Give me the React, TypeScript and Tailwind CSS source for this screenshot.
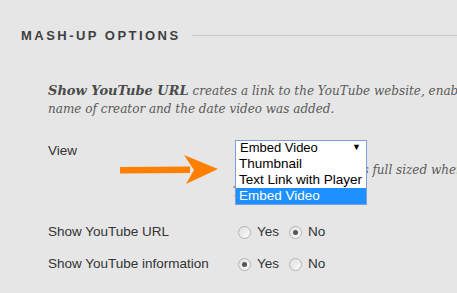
import React from "react";

const Radio = ({ checked }: { checked?: boolean }) => (
  <span className="flex h-[13px] w-[13px] items-center justify-center rounded-full border border-[#b4b4b4] bg-gradient-to-br from-[#e0e0e0] to-[#fafafa]">
    {checked && <span className="h-[5px] w-[5px] rounded-full bg-[#555]" />}
  </span>
);

const OptionRow = ({ label, yes }: { label: string; yes: boolean }) => (
  <div className="flex h-[32px] items-center pl-[48px] text-[13.5px] text-[#333]">
    <div className="w-[190px] shrink-0">{label}</div>
    <div className="flex items-center gap-[6px]">
      <Radio checked={yes} />
      <span>Yes</span>
    </div>
    <div className="ml-[10px] flex items-center gap-[6px]">
      <Radio checked={!yes} />
      <span>No</span>
    </div>
  </div>
);

const App = () => {
  return (
    <div
      className="relative h-[293px] w-[457px] overflow-hidden bg-[#e6e6e6]"
      style={{ fontFamily: '"Liberation Sans", Arial, sans-serif' }}
    >
      {/* section header */}
      <div className="flex items-center gap-[11px] pl-[21px] pt-[26px]">
        <h3 className="text-[13px] font-bold tracking-[0.19em] text-[#3f3f3f]">MASH-UP OPTIONS</h3>
        <div className="h-px flex-1 bg-[#c9c9c9]" />
      </div>

      <p className="mt-[36px] pl-[48px] text-[12px] leading-[18px] whitespace-nowrap text-[#595959] italic [font-family:'DejaVu_Serif',Georgia,serif]">
        <b className="text-[13px] text-[#4a4a4a]">Show YouTube URL</b> creates a link to the YouTube website, enabling
        <br />
        name of creator and the date video was added.
      </p>

      {/* view select */}
      <div className="mt-[22px] flex pl-[48px] text-[13.5px] text-[#333]">
        <div className="w-[187px] shrink-0 pt-[1px]">View</div>
        <div className="relative w-[132px] shrink-0">
          <div className="flex h-[17px] w-[132px] items-center justify-between border border-[#7b9fd6] bg-white pr-[5px] pl-[4px] text-[13px] text-black">
            <span>Embed Video</span>
            <span className="text-[9px]">▼</span>
          </div>
          <div className="pt-[2px] text-[12px] leading-[22px] whitespace-nowrap text-[#595959] italic [font-family:'DejaVu_Serif',Georgia,serif]">
            <div className="ml-[10px]">Thumbnail shows as full sized when selected</div>
            <div className="-ml-[2px]">The video</div>
          </div>
          <div className="absolute top-[16px] left-0 w-[132px] border border-[#7b9fd6] border-t-0 bg-white text-[13.5px] leading-[16px] text-black">
            <div className="px-[3px]">Thumbnail</div>
            <div className="px-[3px]">Text Link with Player</div>
            <div className="bg-[#1e90ff] px-[3px] text-white">Embed Video</div>
          </div>
        </div>
      </div>

      <div className="mt-[14px]">
        <OptionRow label="Show YouTube URL" yes={false} />
        <OptionRow label="Show YouTube information" yes={true} />
      </div>

      {/* annotation arrow */}
      <svg className="absolute top-[153px] left-[118px]" width="102" height="32" viewBox="0 0 102 32">
        <path d="M2 14 L72 13.5 L72 20 L2 20.5 Z" fill="#ff8000" />
        <path d="M66 2 L100 16 L68 31 L76 17 Z" fill="#ff8000" />
      </svg>
    </div>
  );
};

export default App;
